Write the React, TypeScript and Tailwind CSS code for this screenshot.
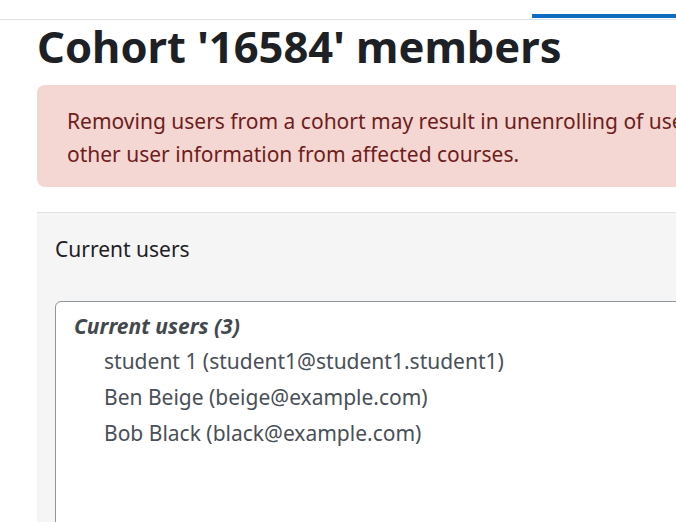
import React from 'react';

const users = [
  'student 1 (student1@student1.student1)',
  'Ben Beige (beige@example.com)',
  'Bob Black (black@example.com)',
];

export default function App() {
  return (
    <div
      className="h-[522px] w-[676px] overflow-hidden bg-white text-[#1d2125]"
      style={{ fontFamily: '"Noto Sans", "Open Sans", sans-serif' }}
    >
      {/* top nav strip with active tab marker */}
      <nav className="flex h-[20px] items-end justify-end border-b border-[#dee2e6]">
        <div className="mb-[1px] h-[4px] w-[144px] bg-[#0f6cbf]" />
      </nav>

      <div className="w-[1400px] pl-[37px]">
        <h2 className="mb-[13px] text-[43.5px] font-bold leading-[52px] whitespace-nowrap">
          Cohort '16584' members
        </h2>

        <div className="rounded-[8px] bg-[#f4d6d2] px-[30px] pt-[20px] pb-[16px] text-[21px] leading-[33px] text-[#6e1d1d] whitespace-nowrap">
          <div>
            Removing users from a cohort may result in unenrolling of users from multiple courses which includes
            deleting of user settings, grades, group membership and
          </div>
          <div>other user information from affected courses.</div>
        </div>

        <div className="mt-[25px] border-t border-[#dee2e6] bg-[#f5f5f5] pl-[18px] pt-[20px] pb-[40px]">
          <div className="text-[21px] leading-[33px]">Current users</div>
          <div className="mt-[35px] h-[300px] rounded-tl-[6px] border border-[#8f959e] bg-white pt-[8px] pl-[18px] text-[21px] text-[#495057]">
            <div className="font-bold italic leading-[33px] text-[#43484d]">Current users (3)</div>
            {users.map((u) => (
              <div key={u} className="pl-[30px] leading-[36px]">
                {u}
              </div>
            ))}
          </div>
        </div>
      </div>
    </div>
  );
}
